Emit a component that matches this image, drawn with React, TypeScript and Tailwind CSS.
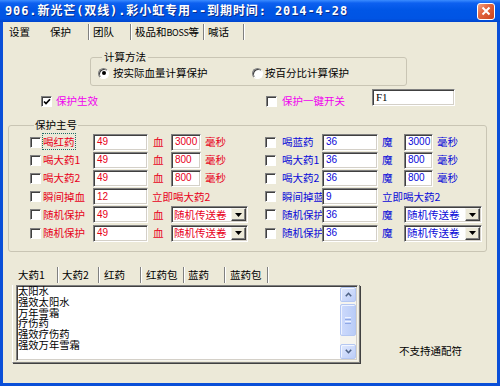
import React from "react";

type Tone = "red" | "blue";
const TONE: Record<Tone, string> = {
  red: "text-[#e8001a]",
  blue: "text-[#0a0ad8]",
};

function Check({ checked = false }: { checked?: boolean }) {
  return (
    <span className="relative block w-[11px] h-[11px] shrink-0 bg-white border border-t-[#808080] border-l-[#808080] border-r-white border-b-white shadow-[inset_1px_1px_0_#404040]">
      {checked && (
        <svg className="absolute left-[1px] top-[1px]" width="8" height="8" viewBox="0 0 8 8">
          <path d="M1 3.5 L3 5.6 L7 1.2" stroke="#000" strokeWidth="1.7" fill="none" />
        </svg>
      )}
    </span>
  );
}

function Radio({ checked = false }: { checked?: boolean }) {
  return (
    <span className="relative flex items-center justify-center w-[11px] h-[11px] shrink-0 rounded-full bg-white border border-t-[#808080] border-l-[#808080] border-r-white border-b-white shadow-[inset_1px_1px_0_#404040]">
      {checked && <span className="block w-[4px] h-[4px] rounded-full bg-black" />}
    </span>
  );
}

function Field({ className, children }: { className: string; children?: React.ReactNode }) {
  return (
    <div
      className={
        "h-[17px] shrink-0 bg-white border border-t-[#808080] border-l-[#808080] border-r-white border-b-white shadow-[inset_1px_1px_0_#404040,inset_-1px_-1px_0_#d4d0c8] flex items-center pl-[3px] text-[10px] leading-none font-['Liberation_Sans',sans-serif] overflow-hidden whitespace-nowrap " +
        className
      }
    >
      {children}
    </div>
  );
}

function Select({ className, tone }: { className: string; tone: Tone }) {
  return (
    <div
      className={
        "h-[17px] shrink-0 bg-white border border-t-[#808080] border-l-[#808080] border-r-white border-b-white shadow-[inset_1px_1px_0_#404040,inset_-1px_-1px_0_#d4d0c8] flex items-center " +
        className
      }
    >
      <span className={"flex-1 pl-[2px] whitespace-nowrap " + TONE[tone]}>随机传送卷</span>
      <div className="w-[15px] h-[13px] mr-[1px] bg-[#ece9d8] border border-t-[#f4f3ee] border-l-[#f4f3ee] border-r-[#404040] border-b-[#404040] shadow-[inset_-1px_-1px_0_#808080] flex items-center justify-center">
        <svg width="7" height="4" viewBox="0 0 7 4">
          <path d="M0 0h7L3.5 4z" fill="#000" />
        </svg>
      </div>
    </div>
  );
}

function Sep() {
  return <div className="w-[2px] h-[16px] shrink-0 border-l border-l-[#808080] border-r border-r-white" />;
}

function LeftRow({
  label,
  focus = false,
  children,
}: {
  label: string;
  focus?: boolean;
  children?: React.ReactNode;
}) {
  return (
    <div className="flex items-center h-[18.2px]">
      <div className="w-[13px] shrink-0">
        <Check />
      </div>
      <div className={"w-[50px] shrink-0 whitespace-nowrap " + TONE.red}>
        {focus ? (
          <span className="-ml-[1px] border border-dotted border-[#1f6b66]">{label}</span>
        ) : (
          label
        )}
      </div>
      {children}
    </div>
  );
}

function RightRow({ label, children }: { label: string; children?: React.ReactNode }) {
  return (
    <div className="flex items-center h-[18.2px]">
      <div className="w-[17px] shrink-0">
        <Check />
      </div>
      <div className={"w-[40px] shrink-0 whitespace-nowrap " + TONE.blue}>{label}</div>
      {children}
    </div>
  );
}

function LeftTail({ v, ms }: { v: string; ms: string }) {
  return (
    <>
      <Field className={"w-[55px] " + TONE.red}>{v}</Field>
      <span className={"ml-[5px] w-[18px] shrink-0 " + TONE.red}>血</span>
      <Field className={"w-[30px] " + TONE.red}>{ms}</Field>
      <span className={"ml-[4px] " + TONE.red}>毫秒</span>
    </>
  );
}

function RightTail({ v, ms }: { v: string; ms: string }) {
  return (
    <>
      <Field className={"w-[56px] " + TONE.blue}>{v}</Field>
      <span className={"ml-[4px] w-[22px] shrink-0 " + TONE.blue}>魔</span>
      <Field className={"w-[29px] " + TONE.blue}>{ms}</Field>
      <span className={"ml-[4px] " + TONE.blue}>毫秒</span>
    </>
  );
}

function ScrollBtn({ up }: { up: boolean }) {
  return (
    <div className="h-[15px] shrink-0 rounded-[2px] border border-[#b4c7f2] bg-[linear-gradient(to_bottom_right,#dfe8fd,#bccdf8)] shadow-[inset_1px_1px_0_#f2f6ff] flex items-center justify-center">
      <svg width="7" height="5" viewBox="0 0 7 5">
        <path
          d={up ? "M0.8 4.2 L3.5 1.3 L6.2 4.2" : "M0.8 0.8 L3.5 3.7 L6.2 0.8"}
          stroke="#4d6185"
          strokeWidth="1.6"
          fill="none"
        />
      </svg>
    </div>
  );
}

export default function App() {
  const items = ["太阳水", "强效太阳水", "万年雪霜", "疗伤药", "强效疗伤药", "强效万年雪霜"];
  return (
    <div className="w-[500px] h-[386px] bg-[#0a4fd8] flex flex-col font-['Noto_Sans_CJK_SC',sans-serif] text-[10.5px] leading-[12px] text-black overflow-hidden">
      {/* Title bar */}
      <div className="h-[22px] shrink-0 flex items-center pl-[5px] pr-[5px] bg-[linear-gradient(to_bottom,#3b8cff_0%,#0d60f0_14%,#0056e6_45%,#0054e4_85%,#0044cc_100%)]">
        <span className="text-white font-bold text-[12px] leading-[14px] tracking-[0.9px] font-['DejaVu_Sans_Mono','Noto_Sans_CJK_SC',monospace] whitespace-nowrap [text-shadow:1px_1px_0_#0b2d8c]">
          906.新光芒(双线).彩小虹专用--到期时间: 2014-4-28
        </span>
        <div className="ml-auto w-[18px] h-[17px] rounded-[3px] border border-white bg-[linear-gradient(135deg,#f2a286_0%,#e2653f_40%,#c9421c_100%)] flex items-center justify-center">
          <svg width="10" height="10" viewBox="0 0 10 10">
            <path d="M1.5 1.5L8.5 8.5M8.5 1.5L1.5 8.5" stroke="#fff" strokeWidth="2" />
          </svg>
        </div>
      </div>

      {/* Window body */}
      <div className="flex-1 mx-[3px] mb-[3px] bg-[#ece9d8] flex flex-col">
        {/* Top tabs */}
        <div className="h-[20px] shrink-0 flex items-center">
          <div className="w-[40px] pl-[6px]">设置</div>
          <div className="w-[45px] pl-[7px]">保护</div>
          <Sep />
          <div className="w-[40px] pl-[3px]">团队</div>
          <Sep />
          <div className="w-[71px] pl-[3px] whitespace-nowrap">
            极品和<span className="text-[9px] tracking-[-0.3px]">BOSS</span>等
          </div>
          <Sep />
          <div className="w-[38px] pl-[3px]">喊话</div>
          <Sep />
        </div>

        {/* 计算方法 */}
        <fieldset className="ml-[87px] mt-[9px] w-[317px] border border-[#c9c5b4] rounded-[3px] pt-[3px] pb-[5px] pl-[7px]">
          <legend className="ml-[4px] px-[2px] leading-[12px]">计算方法</legend>
          <div className="flex items-center h-[14px]">
            <div className="w-[154px] flex items-center gap-[4px]">
              <Radio checked />
              <span>按实际血量计算保护</span>
            </div>
            <div className="flex items-center gap-[2px]">
              <Radio />
              <span>按百分比计算保护</span>
            </div>
          </div>
        </fieldset>

        {/* enable row */}
        <div className="flex mt-[3px] h-[17px]">
          <div className="ml-[38px] w-[225px] flex items-center gap-[4px] mt-[6px] h-[12px] text-[#f000f0]">
            <Check checked />
            <span>保护生效</span>
          </div>
          <div className="w-[106px] flex items-center gap-[5px] mt-[6px] h-[12px] text-[#f000f0]">
            <Check />
            <span>保护一键开关</span>
          </div>
          <Field className="w-[83px] font-['Liberation_Serif',serif] text-[11px]">F1</Field>
        </div>

        {/* 保护主号 */}
        <fieldset className="ml-[5px] mt-[13px] w-[479px] border border-[#c9c5b4] rounded-[3px] pt-[2px] pb-[9px] pl-[21px]">
          <legend className="ml-[4px] px-[1px] leading-[12px]">保护主号</legend>
          <div className="flex">
            <div className="w-[235px] shrink-0 flex flex-col">
              <LeftRow label="喝红药" focus>
                <LeftTail v="49" ms="3000" />
              </LeftRow>
              <LeftRow label="喝大药1">
                <LeftTail v="49" ms="800" />
              </LeftRow>
              <LeftRow label="喝大药2">
                <LeftTail v="49" ms="800" />
              </LeftRow>
              <LeftRow label="瞬间掉血">
                <Field className={"w-[55px] " + TONE.red}>12</Field>
                <span className={"ml-[4px] whitespace-nowrap " + TONE.red}>立即喝大药2</span>
              </LeftRow>
              <LeftRow label="随机保护">
                <Field className={"w-[55px] " + TONE.red}>49</Field>
                <span className={"ml-[5px] w-[18px] shrink-0 " + TONE.red}>血</span>
                <Select className="w-[77px]" tone="red" />
              </LeftRow>
              <LeftRow label="随机保护">
                <Field className={"w-[55px] " + TONE.red}>49</Field>
                <span className={"ml-[5px] w-[18px] shrink-0 " + TONE.red}>血</span>
                <Select className="w-[77px]" tone="red" />
              </LeftRow>
            </div>
            <div className="flex flex-col">
              <RightRow label="喝蓝药">
                <RightTail v="36" ms="3000" />
              </RightRow>
              <RightRow label="喝大药1">
                <RightTail v="36" ms="800" />
              </RightRow>
              <RightRow label="喝大药2">
                <RightTail v="36" ms="800" />
              </RightRow>
              <RightRow label="瞬间掉蓝">
                <Field className={"w-[56px] " + TONE.blue}>9</Field>
                <span className={"ml-[4px] whitespace-nowrap " + TONE.blue}>立即喝大药2</span>
              </RightRow>
              <RightRow label="随机保护">
                <Field className={"w-[56px] " + TONE.blue}>36</Field>
                <span className={"ml-[4px] w-[22px] shrink-0 " + TONE.blue}>魔</span>
                <Select className="w-[78px]" tone="blue" />
              </RightRow>
              <RightRow label="随机保护">
                <Field className={"w-[56px] " + TONE.blue}>36</Field>
                <span className={"ml-[4px] w-[22px] shrink-0 " + TONE.blue}>魔</span>
                <Select className="w-[78px]" tone="blue" />
              </RightRow>
            </div>
          </div>
        </fieldset>

        {/* Bottom tab control */}
        <div className="flex items-end mt-[13px]">
          <div className="ml-[9px] w-[348px] shrink-0 flex flex-col">
            <div className="h-[20px] flex items-center">
              <div className="w-[45px] pl-[6px]">大药1</div>
              <Sep />
              <div className="w-[39px] pl-[3px]">大药2</div>
              <Sep />
              <div className="w-[40px] pl-[4px]">红药</div>
              <Sep />
              <div className="w-[41px] pl-[4px]">红药包</div>
              <Sep />
              <div className="w-[39px] pl-[3px]">蓝药</div>
              <Sep />
              <div className="w-[41px] pl-[4px]">蓝药包</div>
              <Sep />
            </div>
            <div className="h-[78px] border-l border-l-white border-r border-r-[#808080] border-b border-b-[#808080] shadow-[1px_1px_0_#404040] pl-[3px] pr-[1px]">
              <div className="h-[76px] w-[342px] bg-white border border-t-[#808080] border-l-[#808080] border-r-[#f4f3ee] border-b-[#f4f3ee] shadow-[inset_1px_1px_0_#404040,inset_-1px_-1px_0_#d4d0c8] flex">
                <div className="flex-1 pl-[1px] leading-[10.7px] text-[10.3px]">
                  {items.map((it) => (
                    <div key={it} className="h-[10.7px]">
                      {it}
                    </div>
                  ))}
                </div>
                <div className="w-[16px] my-[1px] mr-[1px] flex flex-col bg-[#f5f4ef]">
                  <ScrollBtn up />
                  <div className="flex-1 pt-[2px] pb-[4px]">
                    <div className="h-[32px] rounded-[2px] border border-[#b4c7f2] bg-[linear-gradient(to_right,#cddafc,#b9ccf7)] shadow-[inset_1px_1px_0_#eef3ff] flex flex-col items-center justify-center gap-[1px]">
                      <div className="w-[6px] h-[1px] bg-[#eef3ff]" />
                      <div className="w-[6px] h-[1px] bg-[#8fa8e6]" />
                      <div className="w-[6px] h-[1px] bg-[#eef3ff]" />
                      <div className="w-[6px] h-[1px] bg-[#8fa8e6]" />
                    </div>
                  </div>
                  <ScrollBtn up={false} />
                </div>
              </div>
            </div>
          </div>
          <div className="ml-[39px] mb-[6px] whitespace-nowrap">不支持通配符</div>
        </div>
      </div>
    </div>
  );
}
